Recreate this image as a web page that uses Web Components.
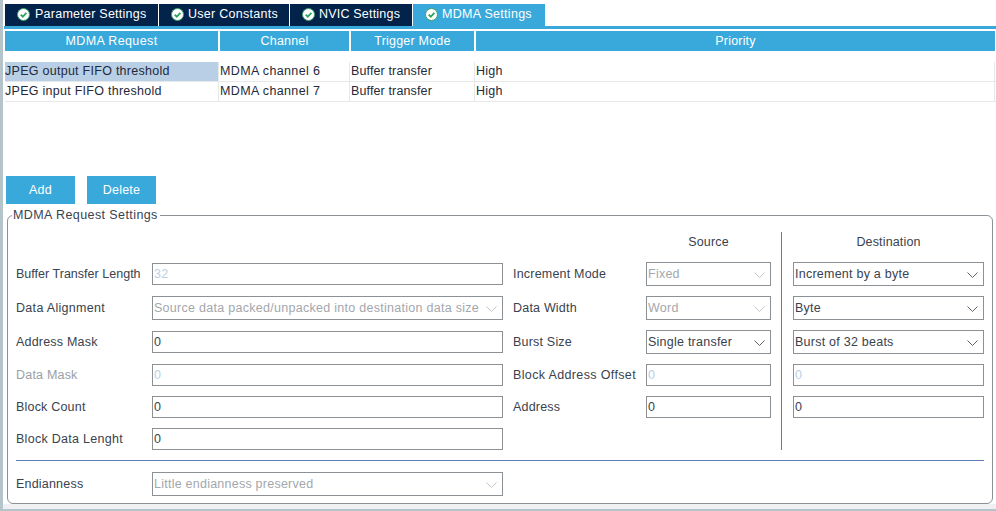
<!DOCTYPE html>
<html lang="en">
<head>
<meta charset="utf-8">
<title>MDMA Settings</title>
<style>
html,body{margin:0;padding:0;background:#fff;}
body{width:996px;height:511px;overflow:hidden;font:12.5px "Liberation Sans",Arial,sans-serif;color:#39424e;}
</style>
</head>
<body>
<mdma-app></mdma-app>
<script>
const base = `*{box-sizing:border-box}`;

class TabBar extends HTMLElement{
  constructor(){super();
    const tabs=[['Parameter Settings',153,0,5,.25],['User Constants',130,0,4,.27],['NVIC Settings',122,0,4,.2],['MDMA Settings',132,1,4,.29]];
    const icon=`<svg width="13" height="13" viewBox="0 0 13 13"><circle cx="6.5" cy="6.5" r="6" fill="#fff" stroke="#3f9f6c" stroke-width="1"/><path d="M3.7 6.6 5.8 8.7 9.4 4.8" fill="none" stroke="#2fa25f" stroke-width="1.7"/></svg>`;
    this.attachShadow({mode:'open'}).innerHTML=`<style>${base}
      :host{display:block}
      .bar{display:flex;gap:1px;height:22px;padding-left:5px}
      .t{display:flex;align-items:center;height:22px;background:#03234b;color:#fff;padding:0 0 2px 12px;white-space:nowrap}
      .t.a{background:#39a9dc}
      .t span{padding-bottom:1px}
      .line{height:3px;margin-left:4px;background:#39a9dc}
      svg{flex:none}
    </style><div class="bar">${tabs.map(t=>`<div class="t ${t[2]?'a':''}" style="width:${t[1]}px;gap:${t[3]}px;letter-spacing:${t[4]}px">${icon}<span>${t[0]}</span></div>`).join('')}</div><div class="line"></div>`;
  }
}
customElements.define('tab-bar',TabBar);

class RequestTable extends HTMLElement{
  constructor(){super();
    const rows=[['JPEG output FIFO threshold','MDMA channel 6','Buffer transfer','High'],['JPEG input FIFO threshold','MDMA channel 7','Buffer transfer','High']];
    this.attachShadow({mode:'open'}).innerHTML=`<style>${base}
      :host{display:block;margin-left:5px;padding-top:2px}
      .g{display:grid;grid-template-columns:213px 2px 129px 2px 123px 2px 519px}
      .h{height:20px;background:#39a9dc;color:#fff;display:flex;align-items:center;justify-content:center;letter-spacing:.2px}
      .sp{height:20px;background:#fff}
      .gaprow{height:11px}
      .r{display:grid;grid-template-columns:214px 131px 125px 520px;height:20px;border-bottom:1px solid #e6e8ea}
      .r>div{height:19px;line-height:18px;color:#1f2a3a;white-space:nowrap;letter-spacing:.27px;border-right:1px solid #e6e8ea}
      .r>div+div{padding-left:1px}
      .r>div:nth-child(2){letter-spacing:.36px}
      .r>div:nth-child(3){letter-spacing:.13px}
      .sel{background:#b8cfe6}
    </style><div class="g">
      <div class="h" style="letter-spacing:.37px">MDMA Request</div><div class="sp"></div><div class="h">Channel</div><div class="sp"></div><div class="h">Trigger Mode</div><div class="sp"></div><div class="h">Priority</div>
    </div><div class="gaprow"></div>
    ${rows.map((r,i)=>`<div class="r">${r.map((c,j)=>`<div class="${i==0&&j==0?'sel':''}">${c}</div>`).join('')}</div>`).join('')}`;
  }
}
customElements.define('request-table',RequestTable);

class ActionButton extends HTMLElement{
  constructor(){super();
    this.attachShadow({mode:'open'}).innerHTML=`<style>${base}
      :host{display:flex;align-items:center;justify-content:center;width:69px;height:28px;background:#39a9dc;color:#fff;letter-spacing:.2px}
    </style><slot></slot>`;
  }
}
customElements.define('action-button',ActionButton);

class FieldBox extends HTMLElement{
  constructor(){super();
    const off=this.hasAttribute('disabled');
    const sel=this.hasAttribute('select');
    const h=sel?24:22;
    const col=off?(sel?'#a3a7ac':'#b9cfe8'):'#39424e';
    const chev=off?'#c3c6c9':'#5a626c';
    this.attachShadow({mode:'open'}).innerHTML=`<style>${base}
      :host{display:flex;align-self:center;height:${h}px;border:1px solid #8c9196;background:#fff;align-items:center;justify-content:space-between;padding:0 5px 0 1px;color:${col};white-space:nowrap;overflow:hidden;letter-spacing:.24px}
      svg{flex:none;margin-top:2px}
      span{padding-bottom:1px}
    </style><span><slot></slot></span>${sel?`<svg width="11" height="6" viewBox="0 0 11 6"><path d="M.5 .5 5.5 5.5 10.5 .5" fill="none" stroke="${chev}" stroke-width="1"/></svg>`:''}`;
  }
}
customElements.define('field-box',FieldBox);

class FieldLabel extends HTMLElement{
  constructor(){super();
    const off=this.hasAttribute('disabled');
    this.attachShadow({mode:'open'}).innerHTML=`<style>
      :host{display:flex;align-items:center;padding-bottom:1px;color:${off?'#9aa0a6':'#39424e'};letter-spacing:.2px;white-space:nowrap}
    </style><slot></slot>`;
  }
}
customElements.define('field-label',FieldLabel);

class SettingsPanel extends HTMLElement{
  constructor(){super();
    this.attachShadow({mode:'open'}).innerHTML=`<style>${base}
      :host{display:block;margin-left:7px;width:986px}
      fieldset{margin:0;padding:0 8px 7px 8px;border:1px solid #8c9196;border-radius:6px;height:296px;min-width:0}
      legend{margin-left:-4px;padding:0 2px 0 1px;line-height:14px;letter-spacing:.41px;color:#39424e}
      .g{display:grid;margin-top:10px;grid-template-columns:136px 351px 10px 133px 125px 22px 191px;grid-template-rows:20px 24px 24px 24px 22px 22px 22px;row-gap:10px}
      .hd{display:flex;align-items:center;justify-content:center;letter-spacing:.15px;padding-bottom:1px}
      .src{grid-column:5;grid-row:1}
      .dst{grid-column:7;grid-row:1}
      .v{grid-column:6;grid-row:1 / 8;width:1px;background:#5b7dbb;margin-left:10px}
      .hr{height:1px;background:#5b7dbb;margin-top:10px;width:968px}
      .e{display:grid;grid-template-columns:136px 351px;grid-template-rows:24px;margin-top:11px}
    </style>
    <fieldset><legend>MDMA Request Settings</legend>
      <div class="g">
        <div class="hd src">Source</div><div class="hd dst">Destination</div><div class="v"></div>

        <field-label style="grid-area:2/1;letter-spacing:.02px">Buffer Transfer Length</field-label>
        <field-box disabled style="grid-area:2/2">32</field-box>
        <field-label style="grid-area:2/4">Increment Mode</field-label>
        <field-box disabled select style="grid-area:2/5">Fixed</field-box>
        <field-box select style="grid-area:2/7">Increment by a byte</field-box>

        <field-label style="grid-area:3/1;letter-spacing:.31px">Data Alignment</field-label>
        <field-box disabled select style="grid-area:3/2;letter-spacing:.28px">Source data packed/unpacked into destination data size</field-box>
        <field-label style="grid-area:3/4">Data Width</field-label>
        <field-box disabled select style="grid-area:3/5">Word</field-box>
        <field-box select style="grid-area:3/7">Byte</field-box>

        <field-label style="grid-area:4/1">Address Mask</field-label>
        <field-box style="grid-area:4/2">0</field-box>
        <field-label style="grid-area:4/4">Burst Size</field-label>
        <field-box select style="grid-area:4/5">Single transfer</field-box>
        <field-box select style="grid-area:4/7">Burst of 32 beats</field-box>

        <field-label disabled style="grid-area:5/1">Data Mask</field-label>
        <field-box disabled style="grid-area:5/2">0</field-box>
        <field-label style="grid-area:5/4;letter-spacing:.36px">Block Address Offset</field-label>
        <field-box disabled style="grid-area:5/5">0</field-box>
        <field-box disabled style="grid-area:5/7">0</field-box>

        <field-label style="grid-area:6/1">Block Count</field-label>
        <field-box style="grid-area:6/2">0</field-box>
        <field-label style="grid-area:6/4">Address</field-label>
        <field-box style="grid-area:6/5">0</field-box>
        <field-box style="grid-area:6/7">0</field-box>

        <field-label style="grid-area:7/1;letter-spacing:.28px">Block Data Lenght</field-label>
        <field-box style="grid-area:7/2">0</field-box>
      </div>
      <div class="hr"></div>
      <div class="e">
        <field-label>Endianness</field-label>
        <field-box disabled select>Little endianness preserved</field-box>
      </div>
    </fieldset>`;
  }
}
customElements.define('settings-panel',SettingsPanel);

class MdmaApp extends HTMLElement{
  constructor(){super();
    this.attachShadow({mode:'open'}).innerHTML=`<style>${base}
      :host{display:grid;grid-template-columns:3px 993px;width:996px;height:511px;background:#fff}
      .strip{background:#b5c3cb}
      .main{display:flex;flex-direction:column;padding-top:4px;min-width:0;margin-left:-3px}
      .btns{display:flex;gap:12px;margin:74px 0 0 6px}
      settings-panel{margin-top:4px}
      .foot1{height:5px;background:#eef0f3;margin-left:3px}
      .foot2{height:2px;background:#b5c3cb}
    </style>
    <div class="strip"></div>
    <div class="main">
      <tab-bar></tab-bar>
      <request-table></request-table>
      <div class="btns"><action-button>Add</action-button><action-button>Delete</action-button></div>
      <settings-panel></settings-panel>
      <div class="foot1"></div><div class="foot2"></div>
    </div>`;
  }
}
customElements.define('mdma-app',MdmaApp);
</script>
</body>
</html>
